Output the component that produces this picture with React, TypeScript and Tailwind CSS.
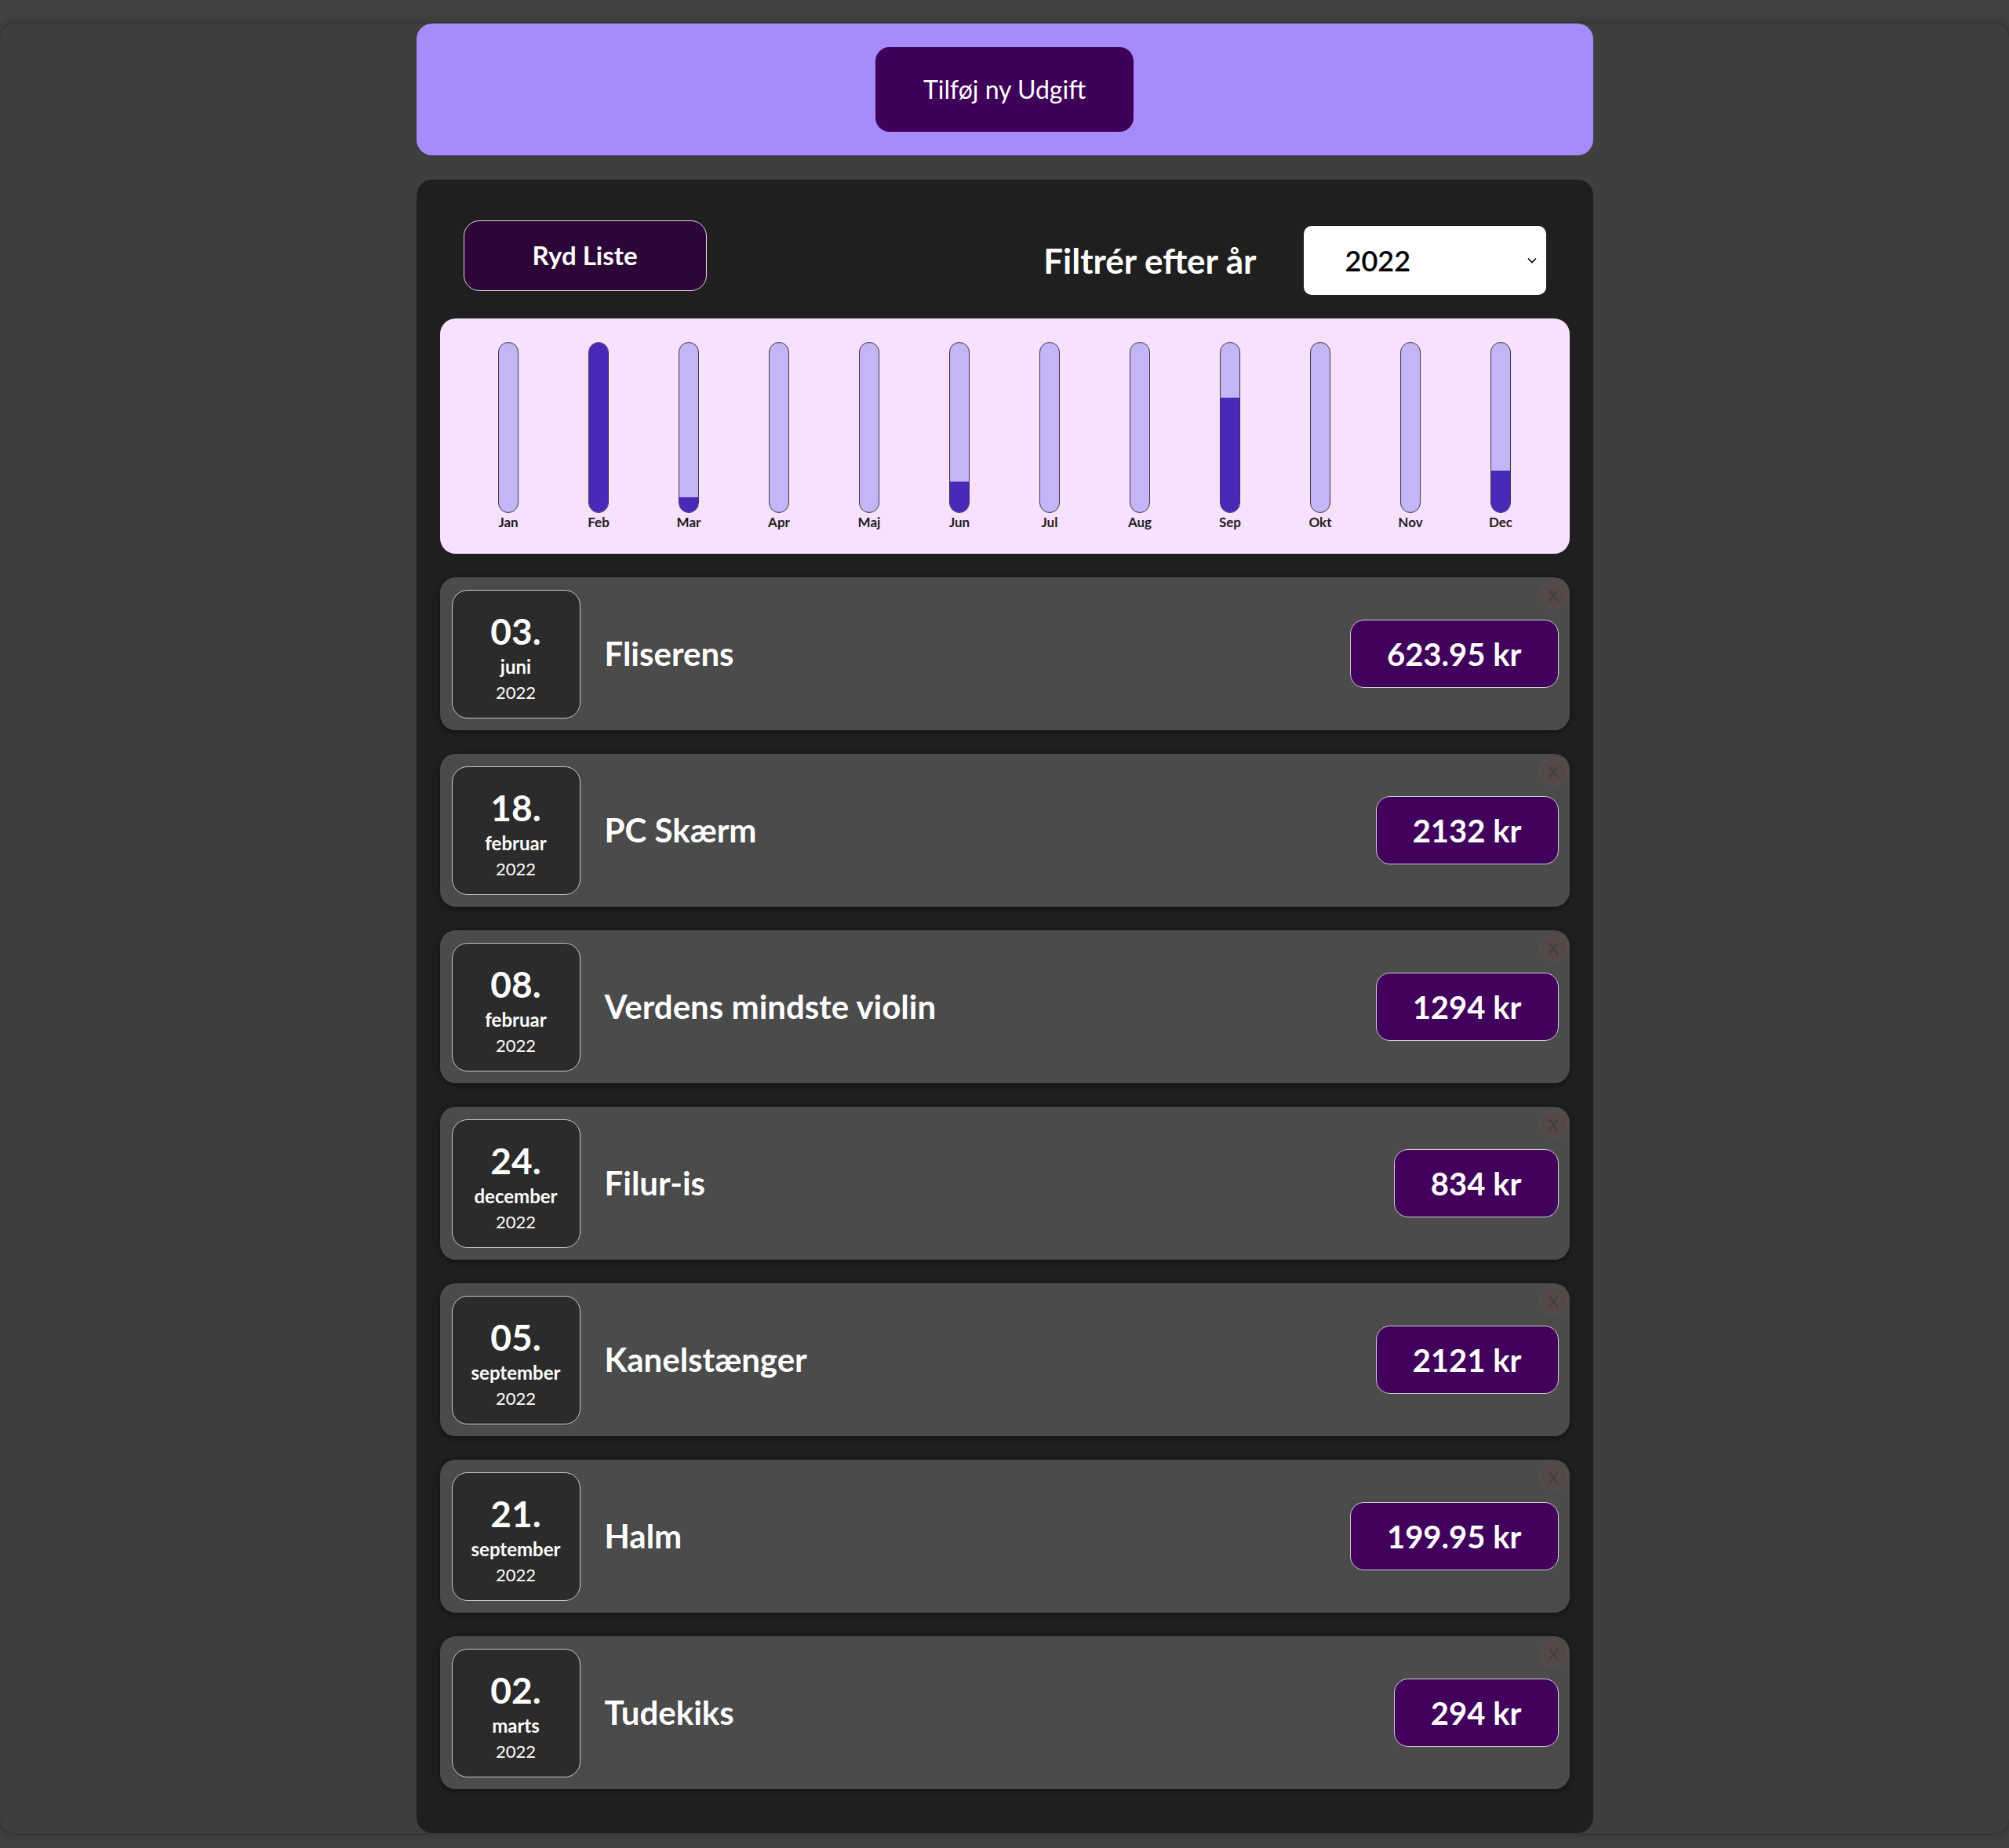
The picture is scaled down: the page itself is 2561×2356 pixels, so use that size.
import React from 'react';

type Expense = {
  day: string;
  month: string;
  monthIndex: number;
  year: string;
  title: string;
  amount: number;
};

const expenses: Expense[] = [
  { day: '03.', month: 'juni', monthIndex: 5, year: '2022', title: 'Fliserens', amount: 623.95 },
  { day: '18.', month: 'februar', monthIndex: 1, year: '2022', title: 'PC Skærm', amount: 2132 },
  { day: '08.', month: 'februar', monthIndex: 1, year: '2022', title: 'Verdens mindste violin', amount: 1294 },
  { day: '24.', month: 'december', monthIndex: 11, year: '2022', title: 'Filur-is', amount: 834 },
  { day: '05.', month: 'september', monthIndex: 8, year: '2022', title: 'Kanelstænger', amount: 2121 },
  { day: '21.', month: 'september', monthIndex: 8, year: '2022', title: 'Halm', amount: 199.95 },
  { day: '02.', month: 'marts', monthIndex: 2, year: '2022', title: 'Tudekiks', amount: 294 },
];

const months = ['Jan', 'Feb', 'Mar', 'Apr', 'Maj', 'Jun', 'Jul', 'Aug', 'Sep', 'Okt', 'Nov', 'Dec'];

const font = { fontFamily: 'Lato, "Noto Sans", sans-serif' };

function Chart() {
  const totals = months.map((_, i) =>
    expenses.filter((e) => e.monthIndex === i).reduce((s, e) => s + e.amount, 0),
  );
  const max = Math.max(...totals);

  return (
    <div className="bg-[#f8e0ff] rounded-[20px] h-[300px] px-[30px] pt-[30px] grid grid-cols-12">
      {months.map((m, i) => (
        <div key={m} className="flex flex-col items-center">
          <div className="w-[26px] h-[218px] rounded-full border border-[#3a3a3a] bg-[#c4b5f6] overflow-hidden flex flex-col justify-end">
            <div
              className="bg-[#4a28b8] w-full"
              style={{ height: `${max ? (totals[i] / max) * 100 : 0}%` }}
            />
          </div>
          <span className="mt-[2px] text-[17px] leading-[20px] font-bold text-[#1c1c1c]">{m}</span>
        </div>
      ))}
    </div>
  );
}

function ExpenseItem({ e }: { e: Expense }) {
  return (
    <div className="relative bg-[#4b4b4b] rounded-[20px] h-[195px] pl-[15px] pr-[14px] flex items-center shadow-[0_2px_8px_rgba(0,0,0,0.45)]">
      <div className="w-[164px] h-[164px] shrink-0 rounded-[20px] border border-[#c8c8c8] bg-[#2b2b2b] flex flex-col items-center justify-center pt-[8px] text-white">
        <span className="text-[46px] leading-[56px] font-bold">{e.day}</span>
        <span className="text-[24px] leading-[34px] font-bold">{e.month}</span>
        <span className="text-[22px] leading-[32px]">{e.year}</span>
      </div>
      <h2 className="ml-[31px] text-[42px] font-bold text-white flex-1">{e.title}</h2>
      <div className="h-[87px] px-[46px] rounded-[18px] border border-[#d0d0d0] bg-[#40005b] flex items-center text-[40px] font-bold text-white">
        {e.amount} kr
      </div>
      <div className="absolute top-[4px] right-[2px] w-[36px] h-[36px] rounded-full border border-[#545454] bg-[#574848] flex items-center justify-center text-[22px] text-[#3e3e3e]">
        X
      </div>
    </div>
  );
}

export default function App() {
  return (
    <div className="min-h-[2356px] bg-[#414141] pt-[30px]" style={font}>
      <div className="bg-[#3f3f3f] rounded-[20px] shadow-[0_0_12px_rgba(0,0,0,0.35)] flex flex-col items-center gap-[31px]">
        {/* Header */}
        <div className="w-[1500px] bg-[#a78bfa] rounded-[20px] py-[30px] flex justify-center">
          <button className="w-[329px] h-[108px] rounded-[18px] bg-[#3f0059] text-white text-[32px] font-normal">
            Tilføj ny Udgift
          </button>
        </div>

        {/* List panel */}
        <div className="w-[1500px] bg-[#1f1f1f] rounded-[20px] px-[30px] pt-[52px] pb-[56px] flex flex-col">
          <div className="px-[30px] flex items-start justify-between h-[95px]">
            <button className="w-[310px] h-[90px] rounded-[20px] border border-[#d8d8d8] bg-[#2c0639] text-white text-[33px] font-bold">
              Ryd Liste
            </button>
            <div className="mt-[7px] flex items-center gap-[60px]">
              <span className="text-[44px] font-bold text-white">Filtrér efter år</span>
              <div className="relative w-[309px] h-[88px] rounded-[10px] bg-white flex items-center pl-[53px]">
                <span className="text-[36px] font-semibold text-black">2022</span>
                <svg
                  className="absolute right-[12px] top-[40px]"
                  width="12"
                  height="8"
                  viewBox="0 0 12 8"
                  fill="none"
                  stroke="#000"
                  strokeWidth="1.6"
                >
                  <path d="M1 1.5l5 5 5-5" />
                </svg>
              </div>
            </div>
          </div>

          <div className="mt-[30px]">
            <Chart />
          </div>

          <div className="mt-[30px] flex flex-col gap-[30px]">
            {expenses.map((e) => (
              <ExpenseItem key={e.title} e={e} />
            ))}
          </div>
        </div>
      </div>
    </div>
  );
}
